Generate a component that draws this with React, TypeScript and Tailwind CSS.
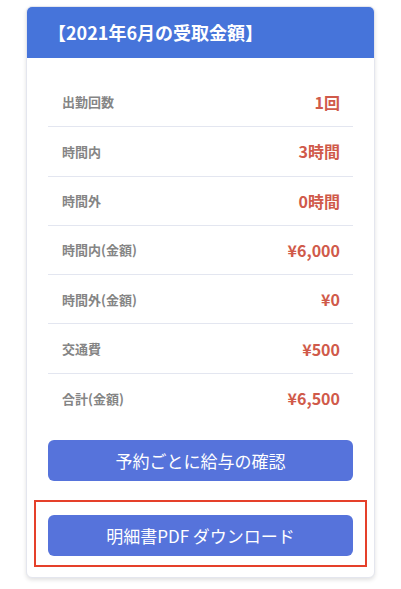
import React from "react";

const rows: [string, string][] = [
  ["出勤回数", "1回"],
  ["時間内", "3時間"],
  ["時間外", "0時間"],
  ["時間内(金額)", "¥6,000"],
  ["時間外(金額)", "¥0"],
  ["交通費", "¥500"],
  ["合計(金額)", "¥6,500"],
];

export default function App() {
  return (
    <div
      className="w-[401px] h-[589px] bg-white pt-[6px] pl-[26px]"
      style={{ fontFamily: '"Noto Sans CJK JP", "Noto Sans", sans-serif' }}
    >
      <div className="w-[349px] rounded-[6px] border border-[#e4e6ee] bg-white shadow-[0_2px_4px_rgba(0,0,0,0.12)] overflow-hidden">
        <div className="h-[51px] bg-[#4674da] flex items-center pl-[21px] text-white text-[18px] font-bold">
          【2021年6月の受取金額】
        </div>
        <div className="px-[21px] pt-[20px] pb-[10px]">
          {rows.map(([label, value], i) => (
            <div
              key={label}
              className={`h-[49.3px] flex items-center justify-between px-[14px] pr-[13px] ${
                i < rows.length - 1 ? "border-b border-[#e3e6f0]" : ""
              }`}
            >
              <span className="text-[13px] font-bold text-[#858585]">{label}</span>
              <span className="text-[16px] font-bold text-[#d05a4a]">{value}</span>
            </div>
          ))}
          <button className="mt-[17px] w-full h-[41px] rounded-[6px] bg-[#5673db] text-white text-[17px] flex items-center justify-center">
            予約ごとに給与の確認
          </button>
          <div className="mt-[19px] -mx-[14px] border-2 border-[#e5402a] px-[12px] pt-[13px] pb-[9px]">
            <button className="w-full h-[41px] rounded-[6px] bg-[#5673db] text-white text-[17px] flex items-center justify-center">
              明細書PDF ダウンロード
            </button>
          </div>
        </div>
      </div>
    </div>
  );
}
